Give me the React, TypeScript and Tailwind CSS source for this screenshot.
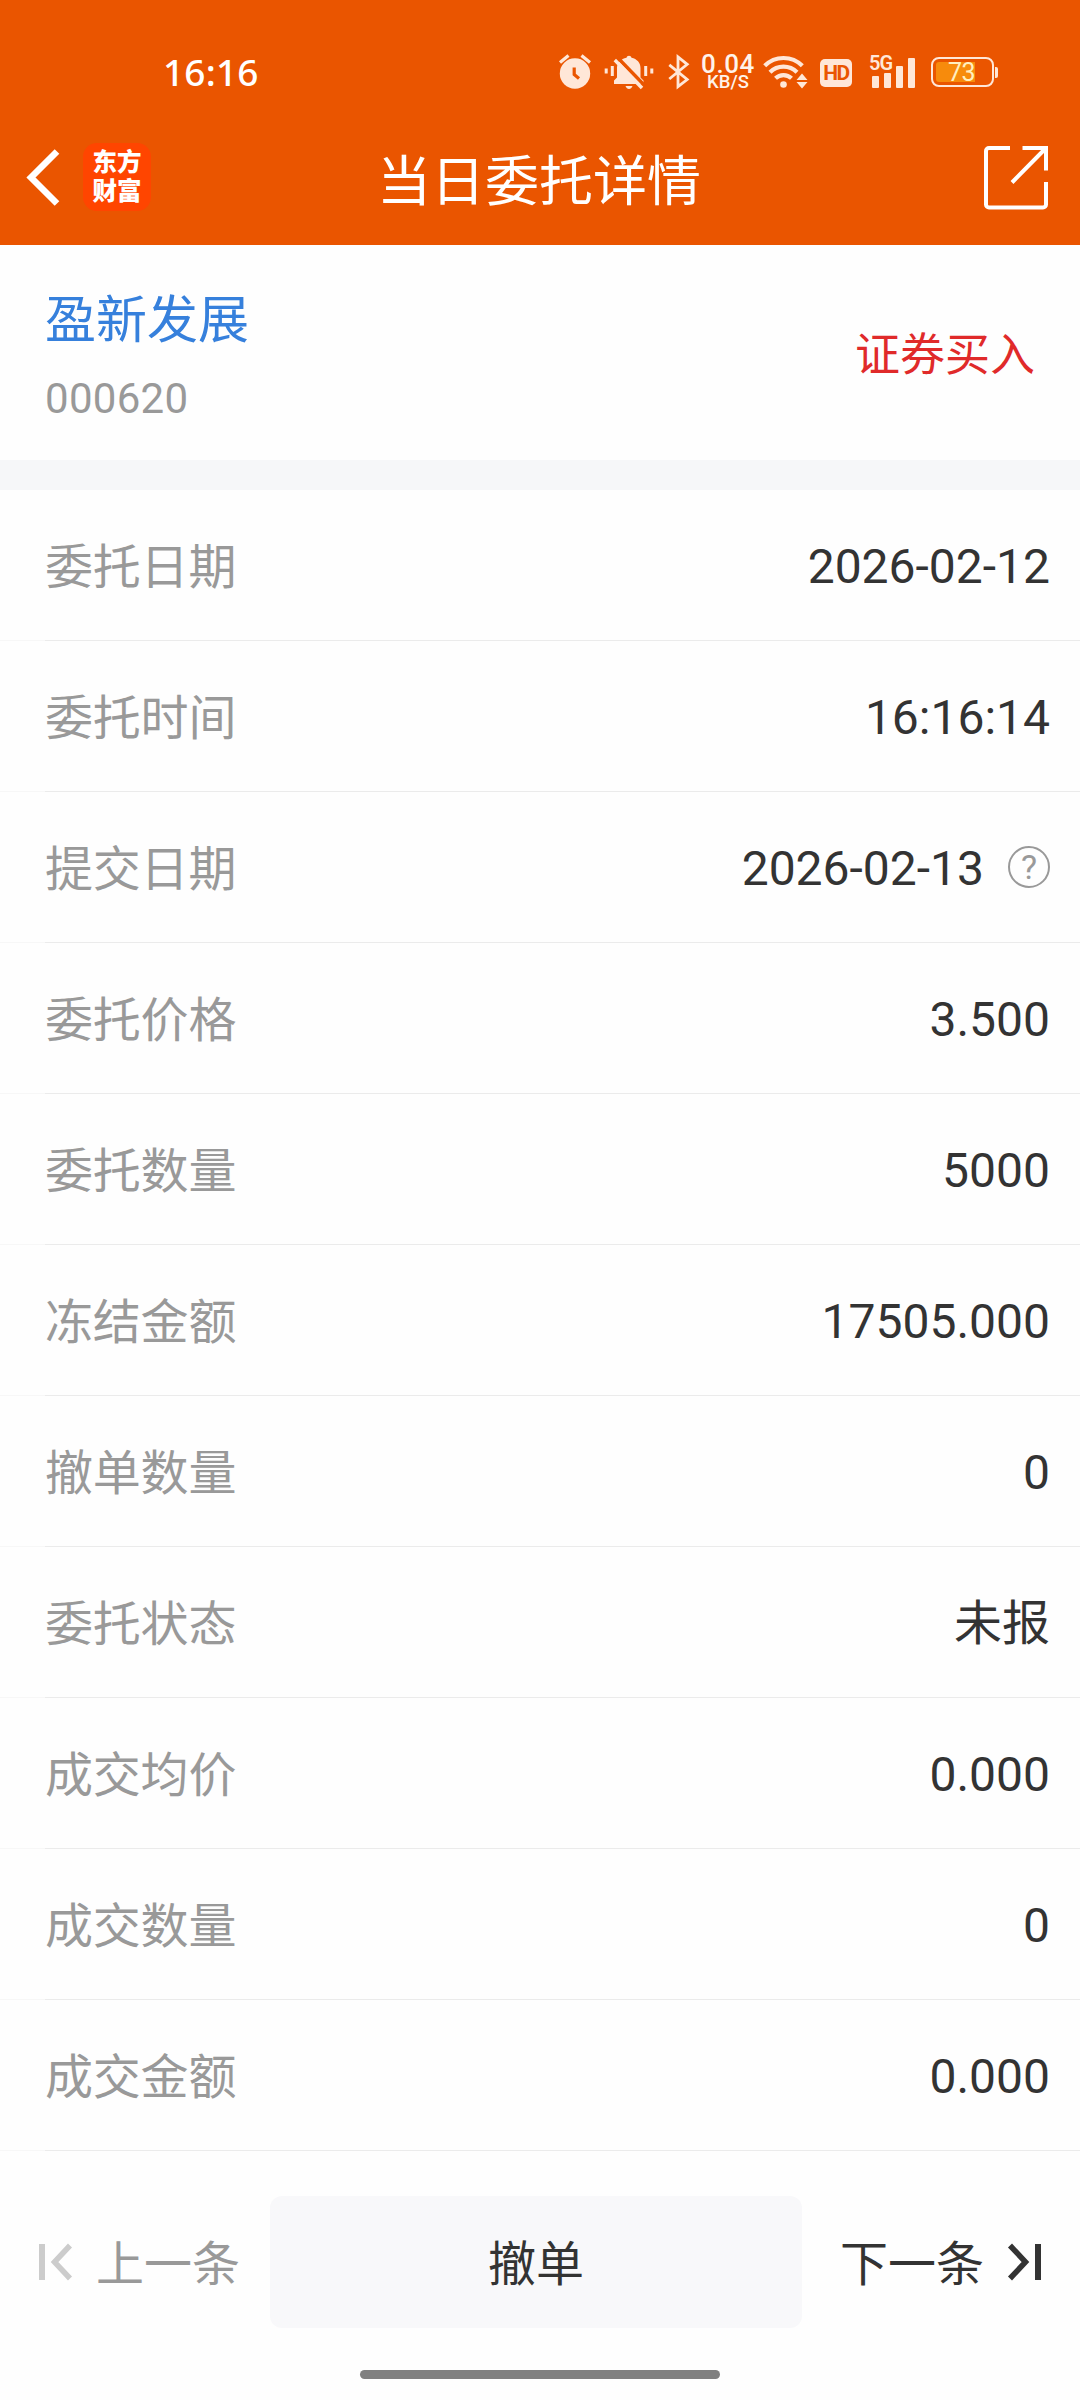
import type { ReactNode } from "react";

const INK = "#ffe7d8";

function AlarmIcon() {
  return (
    <svg width="34" height="36" viewBox="0 0 34 36" fill="none">
      <path d="M2 8.5 10.5 1.5M32 8.5 23.5 1.5" stroke={INK} strokeWidth="3.2" />
      <circle cx="17" cy="19.5" r="15.2" fill={INK} />
      <path d="M16.2 13.5V20.5L21 24.5" stroke="#ea5500" strokeWidth="3.2" />
    </svg>
  );
}

function BellOffIcon() {
  return (
    <svg width="50" height="36" viewBox="0 0 50 36" fill="none">
      <path d="M2.2 14.5v5M8.3 12v10M41.7 12v10M47.8 14.5v5" stroke={INK} strokeWidth="3" />
      <path
        d="M10 30v-3.500l3-3V14C13 8.800 17 5 22.500 3.800c.3-2.800 4.700-2.800 5 0C33 5 36.500 8.800 36.500 14v9.500l3 3V30z"
        fill={INK}
      />
      <path d="M21.500 32h7c-.7 2-2 3-3.500 3s-2.800-1-3.500-3z" fill={INK} />
      <path d="M13.500 3.500 41 32" stroke="#ea5500" strokeWidth="3.500" />
      <path d="M10.800 6 38 34" stroke={INK} strokeWidth="3.400" />
    </svg>
  );
}

function BluetoothIcon() {
  return (
    <svg width="22" height="36" viewBox="0 0 22 36" fill="none" stroke={INK} strokeWidth="2.8">
      <path d="M1.300 10.800 19.200 25.500 10 32.700V3L19.200 10.300 1.300 25" />
    </svg>
  );
}

function WifiIcon() {
  return (
    <svg width="45" height="36" viewBox="0 0 45 36" fill="none">
      <g stroke={INK} strokeWidth="4.200">
        <path d="M1.700 11.800a26.500 26.500 0 0 1 37.600 0" />
        <path d="M7 18.300a19 19 0 0 1 27 0" />
        <path d="M12.500 24.300a11.500 11.500 0 0 1 16 0" />
      </g>
      <circle cx="20.500" cy="30.500" r="3.300" fill={INK} />
      <path d="M39 19.500l5.500 6.500h-11zM39 34.500l5.500-6.500h-11z" fill={INK} />
    </svg>
  );
}

function SignalBars() {
  return (
    <div className="flex h-[36px] w-[47px] items-end gap-[5px] pb-[2px] pl-[3px]">
      <span className="h-[12px] w-[7px] rounded-[1px] bg-[#ffe7d8]" />
      <span className="h-[15px] w-[7px] rounded-[1px] bg-[#ffe7d8]" />
      <span className="h-[22px] w-[7px] rounded-[1px] bg-[#ffe7d8]" />
      <span className="h-[30px] w-[7px] rounded-[1px] bg-[#ffe7d8]" />
    </div>
  );
}

function StatusBar() {
  return (
    <div className="flex h-[138px] items-start justify-between pl-[163px] pr-[82px] pt-[54px]">
      <div className="h-[36px] font-['Noto_Sans'] text-[37px] font-medium leading-[36px] tracking-[0.2px] text-white">
        16:16
      </div>
      <div className="flex h-[36px] items-center">
        <AlarmIcon />
        <div className="ml-[12px]"><BellOffIcon /></div>
        <div className="ml-[14px]"><BluetoothIcon /></div>
        <div className="ml-[11px] flex w-[54px] flex-col items-center font-['Roboto'] font-medium text-[#fff3ea]">
          <span className="text-[26px] leading-[20px] tracking-[0.6px]">0.04</span>
          <span className="text-[18.5px] leading-[17px]">KB/S</span>
        </div>
        <div className="ml-[8px]"><WifiIcon /></div>
        <div className="ml-[12px] mt-[2px] flex h-[28px] w-[32px] items-center justify-center rounded-[5px] bg-[#ffe7d8] font-['Roboto'] text-[21px] font-bold leading-none tracking-[-1.5px] text-[#ea5500]">
          HD
        </div>
        <div className="relative ml-[17px]">
          <SignalBars />
          <span className="absolute left-0 top-0 font-['Roboto'] text-[20px] font-semibold leading-[18px] tracking-[-1px] text-[#ffe7d8]">
            5G
          </span>
        </div>
        <div className="ml-[15px] flex items-center gap-px">
          <div className="flex h-[30px] w-[63px] items-center rounded-[8px] border-2 border-[#ffe7d8] pl-[3px]">
            <div className="flex h-[20px] w-[39px] items-center justify-end rounded-l-[3px] bg-[#f78b0c] font-['Roboto'] text-[25px] leading-none tracking-[-0.5px] text-[#ffefc0]">
              73
            </div>
          </div>
          <span className="h-[11px] w-[3px] rounded-r-[2px] bg-[#ffe7d8]" />
        </div>
      </div>
    </div>
  );
}

function Header() {
  return (
    <header className="h-[245px] bg-[#ea5500]">
      <StatusBar />
      <div className="grid h-[78px] grid-cols-[1fr_auto_1fr] items-center text-white">
        <div className="flex items-center gap-[23px] pl-[26px]">
          <svg width="34" height="58" viewBox="0 0 34 58" fill="none">
            <path d="M31 3.500 5 29.500 31 55.500" stroke="#fff" strokeWidth="6.500" />
          </svg>
          <div className="flex h-[68px] w-[68px] flex-col items-center justify-center rounded-[14px] bg-[#ff4500] pb-[1px] text-[24.5px] font-black leading-[29px]">
            <span>东方</span>
            <span>财富</span>
          </div>
        </div>
        <h1 className="-ml-[2px] pt-[11px] text-[54px] leading-[67px]">当日委托详情</h1>
        <div className="flex justify-end pr-[32px]">
          <svg width="64" height="66" viewBox="0 0 64 66" fill="none" stroke="#fff" strokeWidth="4">
            <path d="M26 4H5a3 3 0 0 0-3 3V60.500a3 3 0 0 0 3 3H59a3 3 0 0 0 3-3V38" />
            <path d="M38.500 4H62V26.500M61 5 28 38.500" />
          </svg>
        </div>
      </div>
    </header>
  );
}

function HelpIcon() {
  return (
    <span className="-mt-[4px] ml-[24px] flex h-[42px] w-[42px] items-center justify-center rounded-full border-2 border-[#999999] text-[34px] leading-none text-[#999999]">
      ?
    </span>
  );
}

function Row({ label, value, extra }: { label: string; value: string; extra?: ReactNode }) {
  return (
    <div>
      <div className="flex h-[150px] items-center justify-between pl-[45px] pr-[30px]">
        <span className="pt-[6px] text-[48px] leading-[70px] tracking-[-0.2px] text-[#999999]">{label}</span>
        <span className="flex items-center pt-[4px] text-[48px] leading-[70px] text-[#333333]">
          {value}
          {extra}
        </span>
      </div>
      <div className="flex h-px">
        <span className="w-[45px] bg-[#f7f7f7]" />
        <span className="flex-1 bg-[#ebebeb]" />
      </div>
    </div>
  );
}

const rows: { label: string; value: string; help?: boolean }[] = [
  { label: "委托日期", value: "2026-02-12" },
  { label: "委托时间", value: "16:16:14" },
  { label: "提交日期", value: "2026-02-13", help: true },
  { label: "委托价格", value: "3.500" },
  { label: "委托数量", value: "5000" },
  { label: "冻结金额", value: "17505.000" },
  { label: "撤单数量", value: "0" },
  { label: "委托状态", value: "未报" },
  { label: "成交均价", value: "0.000" },
  { label: "成交数量", value: "0" },
  { label: "成交金额", value: "0.000" },
];

function StepIcon({ flip }: { flip?: boolean }) {
  return (
    <svg width="34" height="38" viewBox="0 0 34 38" fill="none" stroke="currentColor" strokeWidth="6" className={flip ? "-scale-x-100" : ""}>
      <path d="M3 1V37" />
      <path d="M31 2.500 15.500 19 31 35.500" strokeWidth="5.500" />
    </svg>
  );
}

export default function App() {
  return (
    <div lang="zh-CN" className="flex h-[2400px] w-[1080px] flex-col bg-[#fefefe] font-['Roboto','Noto_Sans_CJK_SC',sans-serif]">
      <Header />
      <section className="flex h-[215px] items-center justify-between px-[45px] pt-[7px]">
        <div className="flex flex-col">
          <span className="text-[51px] leading-[74px] text-[#3680dc]">盈新发展</span>
          <span className="mt-[11px] text-[42px] leading-[60px] tracking-[0.3px] text-[#999999]">000620</span>
        </div>
        <span className="text-[45px] leading-[66px] text-[#e02a2a]">证券买入</span>
      </section>
      <div className="h-[30px] bg-[#f6f7f9]" />
      <main>
        {rows.map((r) => (
          <Row key={r.label} label={r.label} value={r.value} extra={r.help ? <HelpIcon /> : undefined} />
        ))}
      </main>
      <footer className="flex flex-1 flex-col justify-between pb-[21px] pt-[45px]">
        <div className="flex h-[132px] items-center text-[48px] leading-[70px] text-[#333333]">
          <button className="flex w-[270px] items-center gap-[23px] whitespace-nowrap pl-[39px] text-[#999999]">
            <span className="text-[#cccccc]"><StepIcon /></span>
            <span className="pt-[5px]">上一条</span>
          </button>
          <button className="h-[132px] w-[532px] rounded-[12px] bg-[#f8f8fa] pt-[5px]">撤单</button>
          <button className="flex flex-1 items-center justify-end gap-[23px] whitespace-nowrap pr-[39px]">
            <span className="pt-[5px]">下一条</span>
            <StepIcon flip />
          </button>
        </div>
        <div className="h-[9px] w-[360px] self-center rounded-full bg-[#808080]" />
      </footer>
    </div>
  );
}
